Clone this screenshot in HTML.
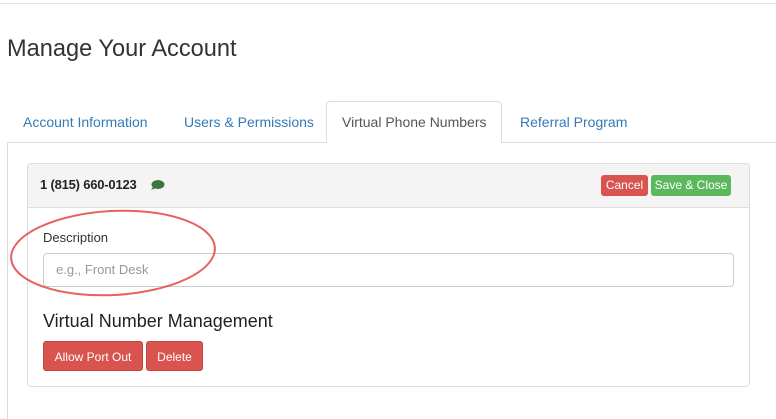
<!DOCTYPE html>
<html><head><style>
body{margin:0;width:776px;height:419px;background:#fff;font-family:"Liberation Sans",sans-serif;position:relative;overflow:hidden;color:#333}
.a{position:absolute}
.tab{position:absolute;top:101px;height:41px;line-height:42px;font-size:14px;color:#337ab7}
.btn{position:absolute;color:#fff;font-size:12px;text-align:center;border-radius:3px}
</style></head><body>
<div class="a" style="left:0;top:3px;width:776px;height:1px;background:#e5e5e5"></div>
<div class="a" style="left:7px;top:36px;font-size:23.6px;color:#333">Manage Your Account</div>
<div class="a" style="left:7px;top:142px;width:769px;height:1px;background:#ddd"></div>
<div class="a" style="left:7px;top:142px;width:1px;height:277px;background:#ddd"></div>
<div class="tab" style="left:23px">Account Information</div>
<div class="tab" style="left:184px">Users &amp; Permissions</div>
<div class="a" style="left:326px;top:101px;width:176px;height:42px;border:1px solid #ddd;border-bottom:none;border-radius:4px 4px 0 0;background:#fff;box-sizing:border-box"></div>
<div class="tab" style="left:342px;color:#555">Virtual Phone Numbers</div>
<div class="tab" style="left:520px">Referral Program</div>
<div class="a" style="left:27px;top:163px;width:723px;height:224px;border:1px solid #ddd;border-radius:4px;box-sizing:border-box"></div>
<div class="a" style="left:28px;top:164px;width:721px;height:43px;background:#f4f4f4;border-bottom:1px solid #ddd;border-radius:3px 3px 0 0"></div>
<div class="a" style="left:40px;top:177px;font-size:13px;font-weight:bold;color:#222;letter-spacing:-0.2px">1 (815) 660-0123</div>
<svg class="a" style="left:150px;top:179px" width="15" height="12" viewBox="0 0 15 12"><ellipse cx="8" cy="5.5" rx="6.5" ry="4.5" fill="#3c763d"/><path d="M3 8 L1 11 L6 9Z" fill="#3c763d"/></svg>
<div class="btn" style="left:601px;top:175px;width:47px;height:21px;line-height:21px;background:#d9534f">Cancel</div>
<div class="btn" style="left:651px;top:175px;width:80px;height:21px;line-height:21px;background:#5cb85c">Save &amp; Close</div>
<div class="a" style="left:43px;top:230px;font-size:13px;color:#333">Description</div>
<div class="a" style="left:43px;top:253px;width:691px;height:34px;border:1px solid #ccc;border-radius:4px;box-sizing:border-box"></div>
<div class="a" style="left:56px;top:262px;font-size:13px;color:#999">e.g., Front Desk</div>
<div class="a" style="left:43px;top:311px;font-size:18px;color:#222">Virtual Number Management</div>
<div class="btn" style="left:43px;top:341px;width:100px;height:30px;line-height:30px;background:#d9534f;border:1px solid #c9443f;box-sizing:border-box">Allow Port Out</div>
<div class="btn" style="left:146px;top:341px;width:57px;height:30px;line-height:30px;background:#d9534f;border:1px solid #c9443f;box-sizing:border-box">Delete</div>
<svg class="a" style="left:0;top:0" width="776" height="419"><ellipse cx="113" cy="253" rx="102" ry="42" fill="none" stroke="#e23a3a" stroke-width="2" opacity="0.8" transform="rotate(-3 113 253)"/></svg>
</body></html>
